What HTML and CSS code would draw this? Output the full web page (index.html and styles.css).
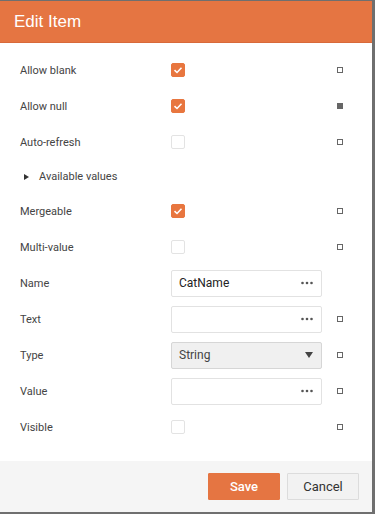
FILE: index.html
```html
<!DOCTYPE html>
<html lang="en">
<head>
    <meta charset="UTF-8">
    <meta name="viewport" content="width=device-width, initial-scale=1.0">
    <title>Edit Item</title>
    <link rel="stylesheet" href="styles.css">
</head>
<body>
    <div class="dialog">
        <div class="dialog-header">Edit Item</div>

        <div class="dialog-body">
            <div class="row">
                <div class="label">Allow blank</div>
                <div class="control"><span class="check checked"><svg viewBox="0 0 14 14"><path d="M3.5 7.2L6 9.5L10.5 4.8" /></svg></span></div>
                <div class="mark"><span class="sq"></span></div>
            </div>
            <div class="row">
                <div class="label">Allow null</div>
                <div class="control"><span class="check checked"><svg viewBox="0 0 14 14"><path d="M3.5 7.2L6 9.5L10.5 4.8" /></svg></span></div>
                <div class="mark"><span class="sq filled"></span></div>
            </div>
            <div class="row">
                <div class="label">Auto-refresh</div>
                <div class="control"><span class="check"></span></div>
                <div class="mark"><span class="sq"></span></div>
            </div>
            <div class="row group">
                <span class="arrow"></span>
                <span class="group-label">Available values</span>
            </div>
            <div class="row">
                <div class="label">Mergeable</div>
                <div class="control"><span class="check checked"><svg viewBox="0 0 14 14"><path d="M3.5 7.2L6 9.5L10.5 4.8" /></svg></span></div>
                <div class="mark"><span class="sq"></span></div>
            </div>
            <div class="row">
                <div class="label">Multi-value</div>
                <div class="control"><span class="check"></span></div>
                <div class="mark"><span class="sq"></span></div>
            </div>
            <div class="row">
                <div class="label">Name</div>
                <div class="control">
                    <div class="input">
                        <span class="value">CatName</span>
                        <svg class="dots" viewBox="0 0 12 4"><circle cx="1.5" cy="2" r="1.3"/><circle cx="6" cy="2" r="1.3"/><circle cx="10.5" cy="2" r="1.3"/></svg>
                    </div>
                </div>
                <div class="mark"></div>
            </div>
            <div class="row">
                <div class="label">Text</div>
                <div class="control">
                    <div class="input">
                        <span class="value"></span>
                        <svg class="dots" viewBox="0 0 12 4"><circle cx="1.5" cy="2" r="1.3"/><circle cx="6" cy="2" r="1.3"/><circle cx="10.5" cy="2" r="1.3"/></svg>
                    </div>
                </div>
                <div class="mark"><span class="sq"></span></div>
            </div>
            <div class="row">
                <div class="label">Type</div>
                <div class="control">
                    <div class="input select">
                        <span class="value">String</span>
                        <span class="caret"></span>
                    </div>
                </div>
                <div class="mark"><span class="sq"></span></div>
            </div>
            <div class="row">
                <div class="label">Value</div>
                <div class="control">
                    <div class="input">
                        <span class="value"></span>
                        <svg class="dots" viewBox="0 0 12 4"><circle cx="1.5" cy="2" r="1.3"/><circle cx="6" cy="2" r="1.3"/><circle cx="10.5" cy="2" r="1.3"/></svg>
                    </div>
                </div>
                <div class="mark"><span class="sq"></span></div>
            </div>
            <div class="row">
                <div class="label">Visible</div>
                <div class="control"><span class="check"></span></div>
                <div class="mark"><span class="sq"></span></div>
            </div>
        </div>

        <div class="dialog-footer">
            <button class="btn btn-save">Save</button>
            <button class="btn btn-cancel">Cancel</button>
        </div>
    </div>
</body>
</html>
```

FILE: styles.css
```css
body {
    margin: 0;
    background-color: #6f6f6f;
    font-family: Roboto, 'Liberation Sans', Arial, sans-serif;
    color: #444;
}
.dialog {
    width: 372px;
    margin-top: 1px;
    background: white;
}
.dialog-header {
    background-color: #e57542;
    color: white;
    font-family: 'Liberation Sans', Arial, sans-serif;
    font-size: 17px;
    height: 42px;
    line-height: 41px;
    padding-left: 14px;
    border-bottom: 1px solid #d8693a;
    box-sizing: border-box;
}
.dialog-body {
    padding: 9px 0 16px;
}
.row {
    display: grid;
    grid-template-columns: 151px 151px 1fr;
    align-items: center;
    height: 36px;
    padding-left: 20px;
    font-size: 11px;
}
.row.group {
    display: flex;
    height: 33px;
    padding-left: 24px;
}
.arrow {
    width: 0;
    height: 0;
    border-top: 3px solid transparent;
    border-bottom: 3px solid transparent;
    border-left: 5px solid #333;
    margin-right: 10px;
}
.control {
    display: flex;
    align-items: center;
}
.check {
    width: 14px;
    height: 14px;
    border: 1px solid #e3e3e3;
    border-radius: 2px;
    box-sizing: border-box;
    background: white;
    display: flex;
}
.check.checked {
    background-color: #e8763f;
    border-color: #e8763f;
}
.check svg {
    width: 14px;
    height: 14px;
    margin: -1px;
}
.check path {
    fill: none;
    stroke: white;
    stroke-width: 1.6;
}
.mark {
    display: flex;
    padding-left: 15px;
}
.sq {
    width: 6px;
    height: 6px;
    border: 1px solid #666;
    box-sizing: border-box;
}
.sq.filled {
    background-color: #666;
}
.input {
    width: 151px;
    height: 27px;
    border: 1px solid #e2e2e2;
    border-radius: 2px;
    box-sizing: border-box;
    display: flex;
    align-items: center;
    justify-content: space-between;
    padding: 0 8px 0 7px;
    font-size: 12px;
    color: #222;
}
.input.select {
    background-color: #f0f0f0;
    border-color: #d6d6d6;
    color: #444;
}
.dots {
    width: 12px;
    height: 4px;
    fill: #555;
}
.caret {
    width: 0;
    height: 0;
    border-left: 4px solid transparent;
    border-right: 4px solid transparent;
    border-top: 6px solid #444;
}
.dialog-footer {
    background-color: #f5f5f5;
    height: 51px;
    display: flex;
    justify-content: flex-end;
    align-items: flex-start;
    padding: 12px 13px 0 0;
    box-sizing: border-box;
    gap: 7px;
}
.btn {
    width: 72px;
    height: 27px;
    font-family: Roboto, 'Liberation Sans', Arial, sans-serif;
    font-size: 13px;
    border-radius: 1px;
    padding: 0;
}
.btn-save {
    background-color: #e57542;
    border: 1px solid #e57542;
    color: white;
    font-weight: 500;
}
.btn-cancel {
    background-color: #f2f2f2;
    border: 1px solid #dcdcdc;
    color: #333;
}
```
